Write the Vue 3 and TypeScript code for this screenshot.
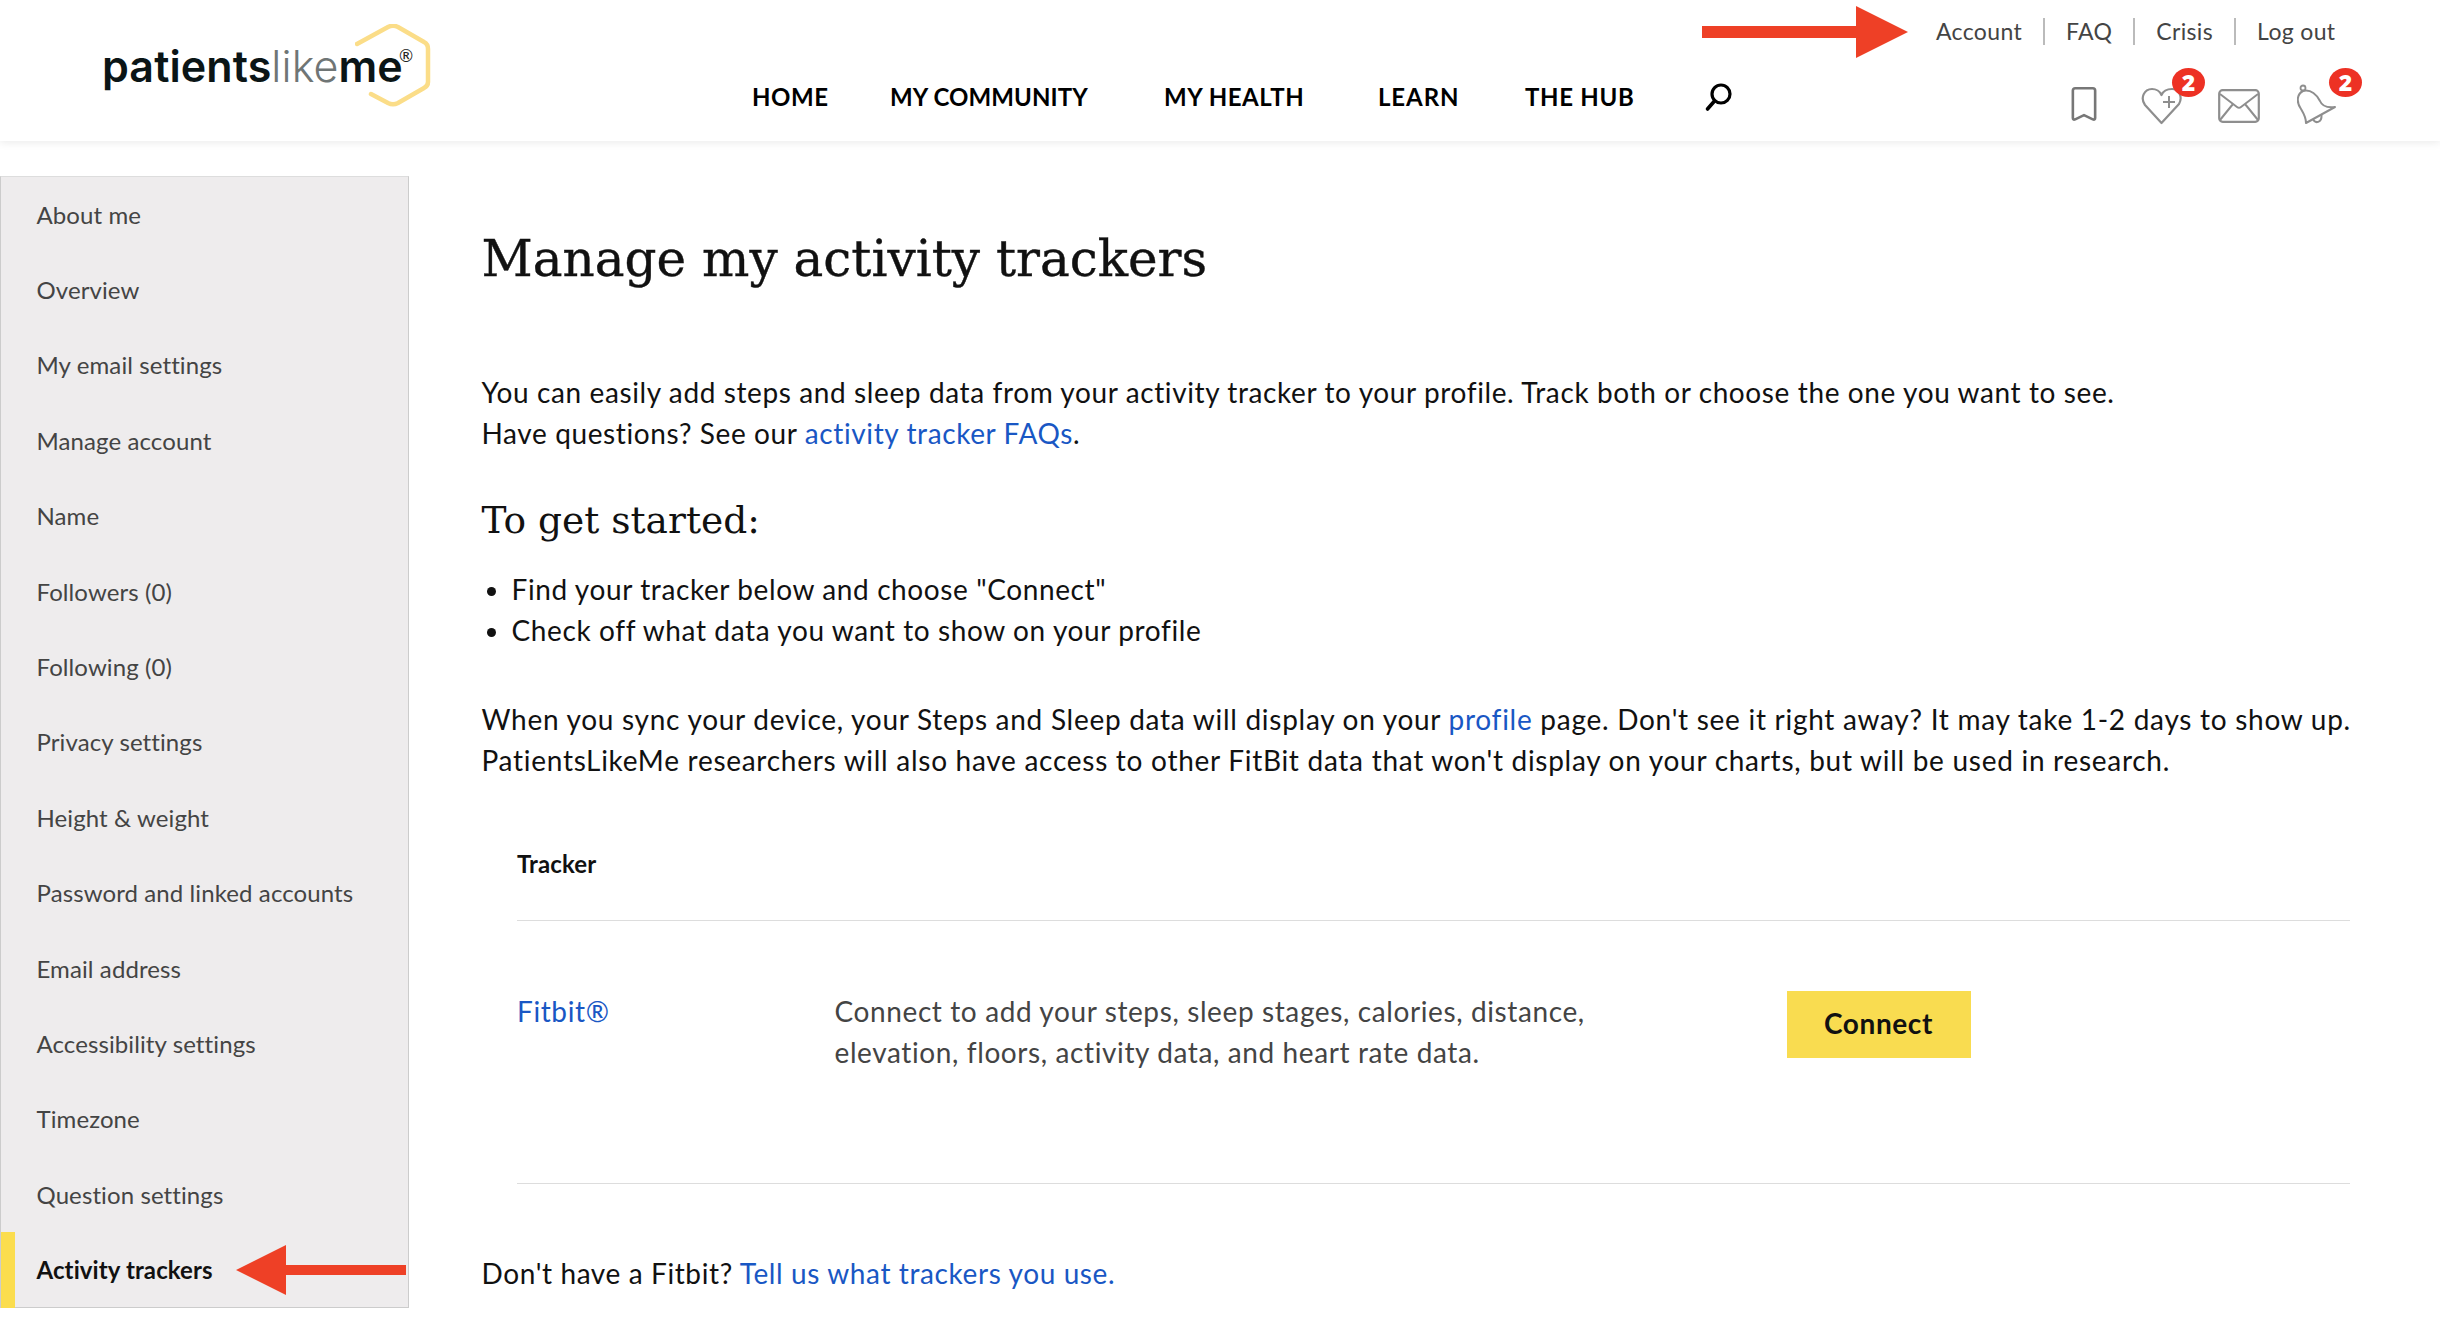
<script setup lang="ts">
const items: string[] = [
  'About me', 'Overview', 'My email settings', 'Manage account', 'Name', 'Followers (0)',
  'Following (0)', 'Privacy settings', 'Height & weight', 'Password and linked accounts',
  'Email address', 'Accessibility settings', 'Timezone', 'Question settings', 'Activity trackers',
]
const nav = [
  { label: 'HOME', cls: 'n1' },
  { label: 'MY COMMUNITY', cls: 'n2' },
  { label: 'MY HEALTH', cls: 'n3' },
  { label: 'LEARN', cls: 'n4' },
  { label: 'THE HUB', cls: 'n5' },
]
const top = ['Account', 'FAQ', 'Crisis', 'Log out']
</script>

<template>
  <div class="page">
    <header class="header">
      <div class="logo">
        <span class="logo-text">patients<span class="like">like</span>me</span>
        <svg class="hex" width="76" height="84" viewBox="0 0 76 84" fill="none">
          <path d="M2 20 L33 3 Q38 0.5 43 3 L69 18 Q73 20 73 25 L73 58 Q73 62 69 64 L43 79 Q38 81.500 33 79 L16 70" stroke="#fbdd88" stroke-width="4.500" stroke-linecap="round" />
        </svg>
        <span class="reg">®</span>
      </div>
      <nav class="nav">
        <a v-for="n in nav" :key="n.label" :class="['nav-link', n.cls]">{{ n.label }}</a>
        <svg class="search" width="30" height="30" viewBox="0 0 30 30" fill="none">
          <circle cx="17" cy="12" r="9" stroke="#000" stroke-width="3.200" />
          <path d="M10.500 19 L3.500 27" stroke="#000" stroke-width="3.600" stroke-linecap="round" />
        </svg>
      </nav>
      <div class="right">
        <div class="toplinks">
          <a v-for="t in top" :key="t" class="toplink">{{ t }}</a>
        </div>
        <div class="icons">
          <svg class="ic i-book" width="26" height="36" viewBox="0 0 28 38" fill="none">
            <path d="M4.500 2 H23.500 Q26 2 26 4.500 V34 Q26 36.500 23.500 35.500 L14 31 L4.500 35.500 Q2 36.500 2 34 V4.500 Q2 2 4.500 2 Z" stroke="#777" stroke-width="2.800" stroke-linejoin="round" />
          </svg>
          <span class="ic-wrap i-heart">
            <svg width="42" height="38" viewBox="0 0 42 38" fill="none">
              <path d="M20.500 36 L4 18 C-1 11 3 2 11 2 C15 2 19 4.500 20.500 8 C22 4.500 26 2 31 2 C38 2 42 10 38 17 Z" stroke="#8e8e8e" stroke-width="2.200" stroke-linejoin="round" />
              <path d="M28 9 V21 M22 15 H34" stroke="#8e8e8e" stroke-width="2" />
            </svg>
            <span class="badge b1">2</span>
          </span>
          <svg class="ic i-mail" width="42" height="34" viewBox="0 0 42 34" fill="none">
            <rect x="1.200" y="1.200" width="39.600" height="31.600" rx="3.500" stroke="#8e8e8e" stroke-width="2.200" />
            <path d="M2 5 L19 18 Q21 19.500 23 18 L40 5 M2 31 L15 15 M40 31 L27 15" stroke="#8e8e8e" stroke-width="2" />
          </svg>
          <span class="ic-wrap i-bell">
            <svg width="40" height="42" viewBox="0 0 40 42" fill="none">
              <circle cx="6" cy="4" r="2.500" stroke="#8e8e8e" stroke-width="1.800" />
              <path d="M6 7 C14 5 20 11 23 17 C25 22 30 24 38 23 L9 39 C9 33 7 30 4 25 C-1 18 0 10 6 7 Z" stroke="#8e8e8e" stroke-width="2" stroke-linejoin="round" />
              <path d="M16 35 C18 40 25 39 24.500 31" stroke="#8e8e8e" stroke-width="2" />
            </svg>
            <span class="badge b2">2</span>
          </span>
        </div>
      </div>
    </header>

    <div class="arrow arrow-top">
      <svg width="206" height="52" viewBox="0 0 206 52"><path d="M0 20 H154 V0 L206 26 L154 52 V32 H0 Z" fill="#ee4026" /></svg>
    </div>

    <div class="body">
      <aside class="side">
        <a v-for="(i, idx) in items" :key="i" :class="['side-item', { active: idx === items.length - 1 }]">{{ i }}</a>
        <svg class="arrow-side" width="170" height="50" viewBox="0 0 170 50"><path d="M170 20 H50 V0 L0 25 L50 50 V30 H170 Z" fill="#ee4026" /></svg>
      </aside>
      <main class="main">
        <h1>Manage my activity trackers</h1>
        <p class="intro">You can easily add steps and sleep data from your activity tracker to your profile. Track both or choose the one you want to see.<br>Have questions? See our <a>activity tracker FAQs</a>.</p>
        <h2>To get started:</h2>
        <ul>
          <li>Find your tracker below and choose "Connect"</li>
          <li>Check off what data you want to show on your profile</li>
        </ul>
        <p class="sync">When you sync your device, your Steps and Sleep data will display on your <a>profile</a> page. Don't see it right away? It may take 1-2 days to show up.<br>PatientsLikeMe researchers will also have access to other FitBit data that won't display on your charts, but will be used in research.</p>
        <section class="table">
          <div class="th">Tracker</div>
          <div class="row">
            <a class="name">Fitbit®</a>
            <div class="desc">Connect to add your steps, sleep stages, calories, distance, elevation, floors, activity data, and heart rate data.</div>
            <button class="connect" type="button">Connect</button>
          </div>
        </section>
        <p class="foot">Don't have a Fitbit? <a>Tell us what trackers you use.</a></p>
      </main>
    </div>
  </div>
</template>

<style>
html, body { margin: 0; background: #fff; }
</style>

<style scoped>
.page { width: 2440px; height: 1342px; overflow: hidden; position: relative; font-family: "Lato", "Noto Sans", sans-serif; color: #111; }
a { cursor: pointer; }
.header { height: 141px; box-shadow: 0 2px 8px rgba(0,0,0,.08); display: flex; position: relative; background: #fff; }
.logo { width: 752px; position: relative; box-sizing: border-box; padding: 40px 0 0 102px; }
.logo-text { font-family: "Inter", sans-serif; font-weight: 600; font-size: 43px; letter-spacing: 0.1px; color: #0b1516; line-height: 52px; }
.like { font-weight: 300; color: #6f7575; }
.hex { position: absolute; left: 355px; top: 24px; }
.reg { position: absolute; left: 399px; top: 47px; font-size: 17px; line-height: 18px; color: #222; }
.nav { width: 1010px; display: flex; align-items: flex-start; padding-top: 82px; box-sizing: border-box; }
.nav-link { font-weight: 700; font-size: 24px; line-height: 30px; color: #000; letter-spacing: .55px; }
.n1 { width: 138px; } .n2 { width: 274px; letter-spacing: .1px; } .n3 { width: 214px; } .n4 { width: 147px; letter-spacing: .9px; } .n5 { width: 180px; letter-spacing: .7px; }
.search { margin-top: 0; margin-left: -1px; }
.right { flex: 1; position: relative; }
.toplinks { position: absolute; left: 174px; top: 18px; display: flex; align-items: center; }
.toplink { font-size: 23px; line-height: 27px; color: #444; padding: 0 21px; border-left: 2px solid #bbb; height: 27px; letter-spacing: .35px; }
.toplink:first-child { border-left: 0; padding-left: 0; }
.icons { position: absolute; left: 0; top: 0; }
.ic, .ic-wrap { position: absolute; display: block; }
.i-book { left: 309px; top: 86px; }
.i-heart { left: 379px; top: 87px; width: 42px; height: 38px; }
.i-mail { left: 456px; top: 89px; }
.i-bell { left: 535px; top: 84px; width: 40px; height: 42px; }
.badge { position: absolute; background: #ed3124; color: #fff; border-radius: 50%; width: 33px; height: 29px; text-align: center; font-weight: 800; font-size: 23px; line-height: 29px; font-family: "Open Sans", sans-serif; }
.b1 { left: 31px; top: -19px; }
.b2 { left: 32px; top: -16px; }
.arrow { position: absolute; }
.arrow-top { left: 1702px; top: 6px; line-height: 0; }
.body { display: flex; padding-top: 35px; }
.side { width: 409px; height: 1132px; box-sizing: border-box; background: #eeeced; border: 1px solid #ccc; border-top-color: #ddd; display: flex; flex-direction: column; position: relative; }
.side-item { height: 75.4px; flex: none; box-sizing: border-box; padding: 0 0 1px 35.500px; display: flex; align-items: center; font-size: 24px; color: #444; letter-spacing: .1px; }
.side-item.active { font-weight: 700; color: #111; border-left: 14px solid #fbdd4e; padding-left: 21.500px; }
.arrow-side { position: absolute; left: 235px; top: 1068px; }
.main { flex: 1; padding-left: 72.500px; font-size: 28px; line-height: 41px; letter-spacing: .61px; }
.main a { color: #1957c4; }
h1 { font-family: "DejaVu Serif", serif; font-weight: 400; font-size: 50px; line-height: 60px; margin: 53px 0 0; color: #111; letter-spacing: 0; -webkit-text-stroke: .4px #111; }
.intro { margin: 83px 0 0; }
h2 { font-family: "DejaVu Serif", serif; font-weight: 400; font-size: 37.500px; line-height: 46px; margin: 43px 0 0; letter-spacing: 0; }
ul { margin: 26px 0 0; padding: 0 0 0 30px; }
.sync { margin: 48px 0 0; white-space: nowrap; letter-spacing: .72px; }
.table { margin: 55px 0 0 35.500px; width: 1833px; }
.th { font-weight: 700; font-size: 24px; line-height: 30px; padding: 13px 0 41px; border-bottom: 1px solid #ddd; letter-spacing: .1px; }
.row { display: flex; align-items: flex-start; height: 263px; box-sizing: border-box; padding-top: 70px; border-bottom: 1px solid #ddd; }
.name { width: 317.500px; }
.main .name { color: #1957c4; }
.desc { width: 800px; margin-right: 152px; color: #444; }
.connect { width: 184px; height: 67px; margin-top: 0; padding: 0 0 3px; background: #f9dc50; border: 0; font-family: inherit; font-weight: 700; font-size: 28px; color: #111; letter-spacing: .6px; }
.foot { margin: 69px 0 0; }
</style>
